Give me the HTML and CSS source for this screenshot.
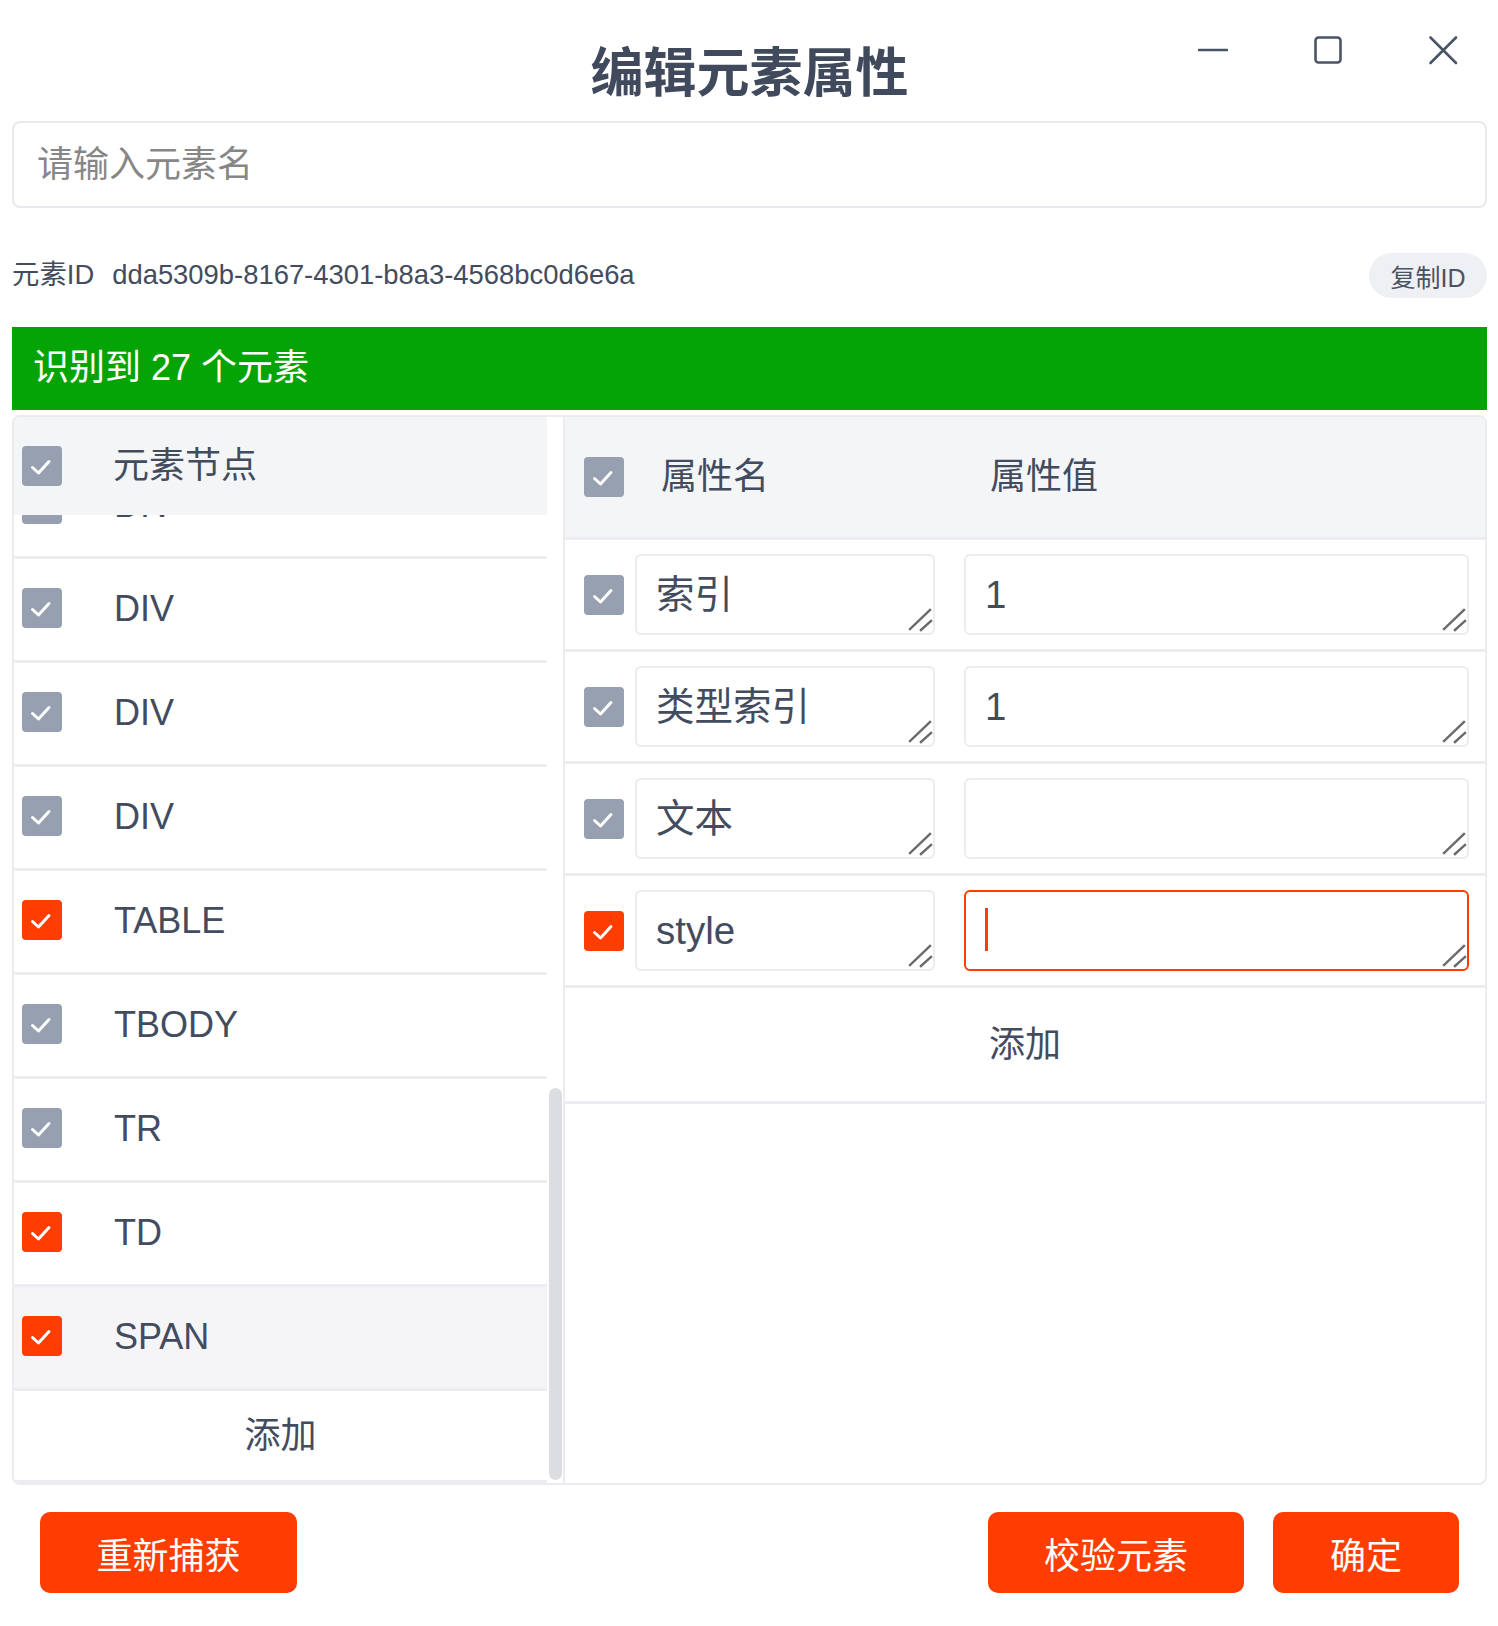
FILE: index.html
```html
<!DOCTYPE html>
<html lang="zh-CN">
<head>
<meta charset="utf-8">
<title>编辑元素属性</title>
<link rel="stylesheet" href="styles.css">
</head>
<body>
<div class="app">
  <header class="titlebar">
    <div class="titlebar-spacer"></div>
    <h1 class="title">编辑元素属性</h1>
    <div class="win-controls">
      <svg class="win-icon" viewBox="0 0 30 30"><line x1="1" y1="15" x2="29" y2="15"/></svg>
      <svg class="win-icon" viewBox="0 0 30 30"><rect x="2.5" y="2.5" width="25" height="25" rx="3"/></svg>
      <svg class="win-icon" viewBox="0 0 30 30"><line x1="2.5" y1="2.5" x2="28" y2="28"/><line x1="28" y1="2.5" x2="2.5" y2="28"/></svg>
    </div>
  </header>

  <input class="search" type="text" placeholder="请输入元素名">

  <div class="id-row">
    <span class="id-label">元素ID</span>
    <span class="id-value">dda5309b-8167-4301-b8a3-4568bc0d6e6a</span>
    <button class="copy-btn" type="button">复制ID</button>
  </div>

  <div class="banner">识别到 27 个元素</div>

  <div class="panels">
    <section class="nodes">
      <div class="nodes-head">
        <span class="cb"><svg viewBox="0 0 40 40"><polyline points="10.5,21.5 16.5,27 27,15.5"/></svg></span>
        <span class="head-text">元素节点</span>
      </div>
      <div class="nodes-list">
        <div class="node-row node-row--first">
          <span class="cb"><svg viewBox="0 0 40 40"><polyline points="10.5,21.5 16.5,27 27,15.5"/></svg></span>
          <span class="node-name">DIV</span>
        </div>
        <div class="node-row">
          <span class="cb"><svg viewBox="0 0 40 40"><polyline points="10.5,21.5 16.5,27 27,15.5"/></svg></span>
          <span class="node-name">DIV</span>
        </div>
        <div class="node-row">
          <span class="cb"><svg viewBox="0 0 40 40"><polyline points="10.5,21.5 16.5,27 27,15.5"/></svg></span>
          <span class="node-name">DIV</span>
        </div>
        <div class="node-row">
          <span class="cb"><svg viewBox="0 0 40 40"><polyline points="10.5,21.5 16.5,27 27,15.5"/></svg></span>
          <span class="node-name">DIV</span>
        </div>
        <div class="node-row">
          <span class="cb cb--on"><svg viewBox="0 0 40 40"><polyline points="10.5,21.5 16.5,27 27,15.5"/></svg></span>
          <span class="node-name">TABLE</span>
        </div>
        <div class="node-row">
          <span class="cb"><svg viewBox="0 0 40 40"><polyline points="10.5,21.5 16.5,27 27,15.5"/></svg></span>
          <span class="node-name">TBODY</span>
        </div>
        <div class="node-row">
          <span class="cb"><svg viewBox="0 0 40 40"><polyline points="10.5,21.5 16.5,27 27,15.5"/></svg></span>
          <span class="node-name">TR</span>
        </div>
        <div class="node-row">
          <span class="cb cb--on"><svg viewBox="0 0 40 40"><polyline points="10.5,21.5 16.5,27 27,15.5"/></svg></span>
          <span class="node-name">TD</span>
        </div>
        <div class="node-row node-row--active">
          <span class="cb cb--on"><svg viewBox="0 0 40 40"><polyline points="10.5,21.5 16.5,27 27,15.5"/></svg></span>
          <span class="node-name">SPAN</span>
        </div>
        <div class="node-add">添加</div>
      </div>
    </section>

    <div class="scroll-track"><div class="scroll-thumb"></div></div>

    <section class="attrs">
      <div class="attrs-head">
        <span class="cb"><svg viewBox="0 0 40 40"><polyline points="10.5,21.5 16.5,27 27,15.5"/></svg></span>
        <span class="col-name">属性名</span>
        <span class="col-value">属性值</span>
      </div>
      <div class="attr-row">
        <span class="cb"><svg viewBox="0 0 40 40"><polyline points="10.5,21.5 16.5,27 27,15.5"/></svg></span>
        <div class="field field--name"><textarea class="ta" spellcheck="false">索引</textarea><svg class="grip" viewBox="0 0 26 26"><line x1="3" y1="23" x2="23" y2="4"/><line x1="14" y1="24" x2="24" y2="15"/></svg></div>
        <div class="field field--value"><textarea class="ta" spellcheck="false">1</textarea><svg class="grip" viewBox="0 0 26 26"><line x1="3" y1="23" x2="23" y2="4"/><line x1="14" y1="24" x2="24" y2="15"/></svg></div>
      </div>
      <div class="attr-row">
        <span class="cb"><svg viewBox="0 0 40 40"><polyline points="10.5,21.5 16.5,27 27,15.5"/></svg></span>
        <div class="field field--name"><textarea class="ta" spellcheck="false">类型索引</textarea><svg class="grip" viewBox="0 0 26 26"><line x1="3" y1="23" x2="23" y2="4"/><line x1="14" y1="24" x2="24" y2="15"/></svg></div>
        <div class="field field--value"><textarea class="ta" spellcheck="false">1</textarea><svg class="grip" viewBox="0 0 26 26"><line x1="3" y1="23" x2="23" y2="4"/><line x1="14" y1="24" x2="24" y2="15"/></svg></div>
      </div>
      <div class="attr-row">
        <span class="cb"><svg viewBox="0 0 40 40"><polyline points="10.5,21.5 16.5,27 27,15.5"/></svg></span>
        <div class="field field--name"><textarea class="ta" spellcheck="false">文本</textarea><svg class="grip" viewBox="0 0 26 26"><line x1="3" y1="23" x2="23" y2="4"/><line x1="14" y1="24" x2="24" y2="15"/></svg></div>
        <div class="field field--value"><textarea class="ta" spellcheck="false"></textarea><svg class="grip" viewBox="0 0 26 26"><line x1="3" y1="23" x2="23" y2="4"/><line x1="14" y1="24" x2="24" y2="15"/></svg></div>
      </div>
      <div class="attr-row">
        <span class="cb cb--on"><svg viewBox="0 0 40 40"><polyline points="10.5,21.5 16.5,27 27,15.5"/></svg></span>
        <div class="field field--name"><textarea class="ta" spellcheck="false">style</textarea><svg class="grip" viewBox="0 0 26 26"><line x1="3" y1="23" x2="23" y2="4"/><line x1="14" y1="24" x2="24" y2="15"/></svg></div>
        <div class="field field--value"><textarea class="ta ta--focus" spellcheck="false"></textarea><span class="caret"></span><svg class="grip" viewBox="0 0 26 26"><line x1="3" y1="23" x2="23" y2="4"/><line x1="14" y1="24" x2="24" y2="15"/></svg></div>
      </div>
      <div class="attr-add">添加</div>
    </section>
  </div>

  <footer class="actions">
    <button class="btn btn-recapture" type="button">重新捕获</button>
    <button class="btn btn-verify" type="button">校验元素</button>
    <button class="btn btn-ok" type="button">确定</button>
  </footer>
</div>
</body>
</html>
```

FILE: styles.css
```css
* {
  box-sizing: border-box;
}

html,
body {
  margin: 0;
  background: #ffffff;
}

body {
  font-family: "Liberation Sans", "Noto Sans CJK SC", sans-serif;
  color: #434c5e;
}

.app {
  width: 1498px;
  height: 1626px;
  padding: 0 11px 0 12px;
  display: flex;
  flex-direction: column;
  overflow: hidden;
}

/* ---------- title bar ---------- */
.titlebar {
  height: 121px;
  flex: none;
  display: grid;
  grid-template-columns: 1fr auto 1fr;
}

.title {
  margin: 0;
  align-self: center;
  padding-top: 17px;
  font-family: "Noto Sans CJK SC", sans-serif;
  font-size: 53px;
  line-height: 1;
  font-weight: 700;
  color: #414a5c;
}

.win-controls {
  justify-self: end;
  align-self: start;
  display: flex;
  gap: 85px;
  padding-top: 35px;
  padding-right: 29px;
}

.win-icon {
  width: 30px;
  height: 30px;
  fill: none;
  stroke: #4a5466;
  stroke-width: 2.6;
  stroke-linecap: round;
}

/* ---------- search ---------- */
.search {
  flex: none;
  display: block;
  width: 100%;
  height: 87px;
  border: 2px solid #e9e9ee;
  border-radius: 8px;
  padding: 0 23px;
  font-family: inherit;
  font-size: 36px;
  color: #434c5e;
  outline: none;
  background: #fff;
}

.search::placeholder {
  color: #878787;
}

/* ---------- id row ---------- */
.id-row {
  flex: none;
  margin-top: 45px;
  height: 45px;
  display: flex;
  align-items: center;
  font-size: 27.4px;
  line-height: 32px;
  color: #434c5e;
}

.id-label,
.id-value {
  margin-bottom: 1px;
}

.id-value {
  margin-left: 18px;
}

.copy-btn {
  margin-left: auto;
  width: 118px;
  height: 45px;
  border: none;
  border-radius: 23px;
  background: #eff0f4;
  padding: 0;
  font-family: inherit;
  font-size: 25px;
  color: #4a5263;
}

/* ---------- banner ---------- */
.banner {
  flex: none;
  margin-top: 29px;
  height: 83px;
  background: #05a405;
  color: #ffffff;
  font-size: 36px;
  line-height: 40px;
  padding: 0 0 1px 21px;
  display: flex;
  align-items: center;
}

/* ---------- panels ---------- */
.panels {
  flex: none;
  margin-top: 5px;
  height: 1070px;
  border: 2px solid #ebebf0;
  border-radius: 8px;
  display: grid;
  grid-template-columns: 533px 16px 1fr;
  overflow: hidden;
}

.cb {
  flex: none;
  width: 40px;
  height: 40px;
  border-radius: 4px;
  background: #97a0b0;
  display: block;
}

.cb--on {
  background: #ff3d00;
}

.cb svg {
  display: block;
  width: 40px;
  height: 40px;
  fill: none;
  stroke: #ffffff;
  stroke-width: 3;
  stroke-linecap: round;
  stroke-linejoin: round;
}

/* left: nodes */
.nodes {
  display: flex;
  flex-direction: column;
  min-height: 0;
}

.nodes-head {
  flex: none;
  height: 98px;
  background: #f4f5f7;
  display: flex;
  align-items: center;
  padding-left: 8px;
  gap: 51px;
  font-size: 36px;
  line-height: 40px;
}

.nodes-list {
  flex: 1;
  overflow: hidden;
}

.node-row {
  height: 104px;
  border-bottom: 3px solid #ececf1;
  display: flex;
  align-items: center;
  padding: 0 0 3px 8px;
  gap: 52px;
  font-size: 36px;
  line-height: 37px;
}

.node-row--first {
  margin-top: -60px;
}

.node-row--active {
  background: #f5f5f7;
}

.node-add {
  height: 92px;
  border-bottom: 3px solid #ececf1;
  display: flex;
  align-items: center;
  justify-content: center;
  font-size: 36px;
  line-height: 40px;
}

/* scrollbar */
.scroll-track {
  display: flex;
  flex-direction: column;
  justify-content: flex-end;
  padding: 0 1px 3px 2px;
}

.scroll-thumb {
  height: 392px;
  width: 13px;
  border-radius: 7px;
  background: #dcdde1;
}

/* right: attributes */
.attrs {
  border-left: 2px solid #ebebf0;
  display: flex;
  flex-direction: column;
}

.attrs-head {
  flex: none;
  height: 123px;
  border-bottom: 3px solid #ececf1;
  background: #f4f5f7;
  display: flex;
  align-items: center;
  padding-left: 19px;
  font-size: 36px;
  line-height: 40px;
}

.col-name {
  width: 300px;
  margin-left: 11px;
  padding-left: 26px;
}

.col-value {
  margin-left: 29px;
  padding-left: 26px;
}

.attr-row {
  flex: none;
  height: 112px;
  border-bottom: 3px solid #ececf1;
  display: flex;
  align-items: center;
  padding: 0 16px 0 19px;
}

.field {
  position: relative;
}

.field--name {
  flex: none;
  width: 300px;
  margin-left: 11px;
}

.field--value {
  flex: 1;
  margin-left: 29px;
}

.ta {
  display: block;
  width: 100%;
  height: 81px;
  border: 2px solid #ebebf0;
  border-radius: 6px;
  padding: 16px 19px;
  font-family: "Liberation Sans", "Noto Sans CJK SC", sans-serif;
  font-size: 38.5px;
  line-height: 45px;
  color: #434c5e;
  background: #ffffff;
  overflow: hidden;
  outline: none;
  resize: none;
}

.ta--focus {
  border-color: #ff3d00;
}

.grip {
  position: absolute;
  right: 2px;
  bottom: 3px;
  width: 26px;
  height: 26px;
  fill: none;
  stroke: #6a6a6a;
  stroke-width: 2.4;
  stroke-linecap: square;
  pointer-events: none;
}

.caret {
  position: absolute;
  left: 21px;
  top: 18px;
  width: 3px;
  height: 43px;
  background: #ff3d00;
}

.attr-add {
  flex: none;
  height: 116px;
  border-bottom: 3px solid #ececf1;
  display: flex;
  align-items: center;
  justify-content: center;
  font-size: 36px;
  line-height: 40px;
}

/* ---------- footer actions ---------- */
.actions {
  flex: none;
  margin-top: 27px;
  display: flex;
  padding: 0 28px;
}

.btn {
  height: 81px;
  border: none;
  border-radius: 10px;
  background: #ff3d00;
  color: #ffffff;
  padding: 0;
  font-family: "Liberation Sans", "Noto Sans CJK SC", sans-serif;
  font-size: 36px;
}

.btn-recapture {
  width: 257px;
}

.btn-verify {
  width: 256px;
  margin-left: auto;
}

.btn-ok {
  width: 186px;
  margin-left: 29px;
}
```
